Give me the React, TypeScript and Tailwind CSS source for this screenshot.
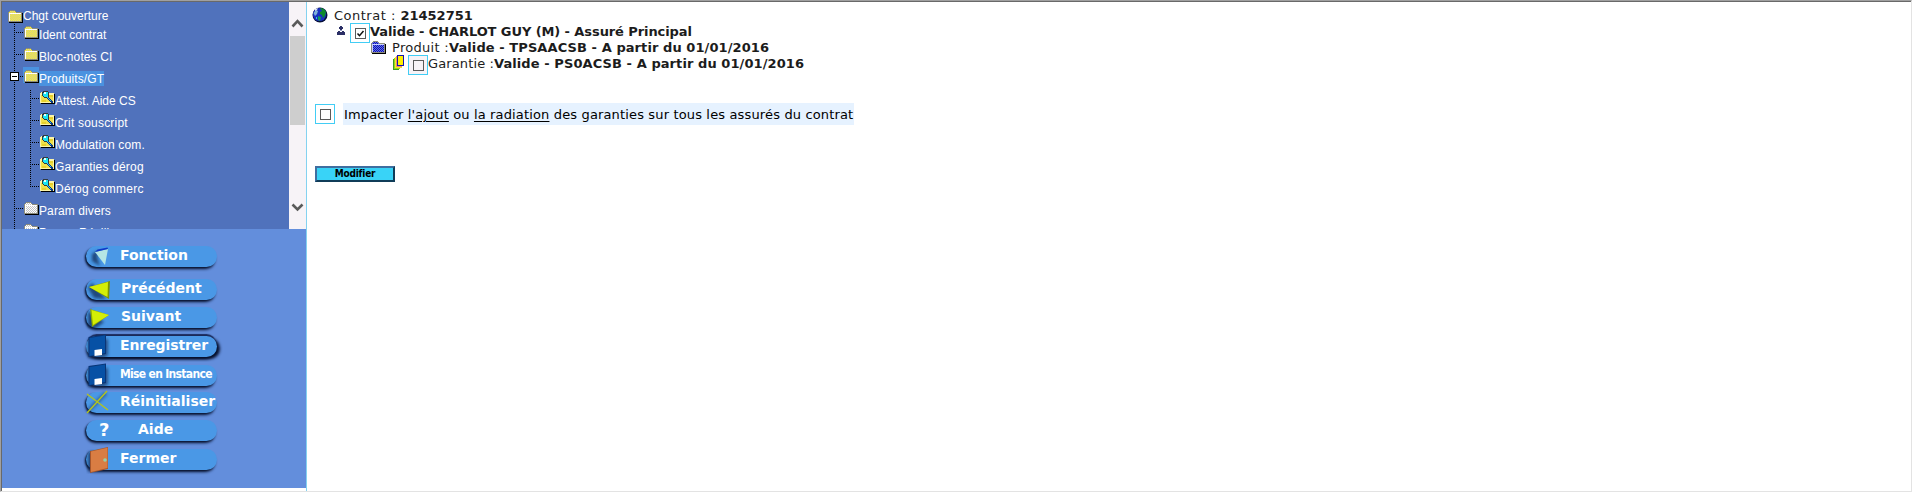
import React from "react";

const V_DOTS = "bg-[repeating-linear-gradient(to_bottom,#000_0_1px,transparent_1px_2px)]";
const H_DOTS = "bg-[repeating-linear-gradient(to_right,#000_0_1px,transparent_1px_2px)]";

function Folder({ id, light, dark, edge = "#fff" }: { id: string; light: string; dark: string; edge?: string }) {
  return (
    <svg width="15" height="13" viewBox="0 0 15 13" shapeRendering="crispEdges" className="block shrink-0">
      <defs>
        <pattern id={id} width="2" height="2" patternUnits="userSpaceOnUse">
          <rect width="2" height="2" fill={light} />
          <rect width="1" height="1" fill={dark} />
          <rect x="1" y="1" width="1" height="1" fill={dark} />
        </pattern>
      </defs>
      <path d="M1 12h13V3h1v10H1z" fill="#000" />
      <path d="M0 2h1V1h1V0h5v1h1v1h6v10H0z" fill="#8c8c7c" />
      <path d="M1 2h1V1h5v1h1v1h5v8H1z" fill={`url(#${id})`} />
      <path d="M1 3h12v1H2v7H1z" fill={edge} />
    </svg>
  );
}

function FolderSearch() {
  return (
    <svg width="15" height="13" viewBox="0 0 15 13" shapeRendering="crispEdges" className="block shrink-0">
      <path d="M1 12h13V3h1v10H1z" fill="#000" />
      <path d="M0 2h1V1h6v1h7v10H0z" fill="#fbf4a8" />
      <path d="M1 4h12v7H1z" fill="#efe04a" />
      <path d="M9 4h4v2H9zM2 9h4v2H2z" fill="#e6cf2c" />
      <path d="M3 0h5v1h1v5H8v1H4V6H3V5H2V1h1z" fill="#303a40" />
      <path d="M4 1h4v5H4V5H3V2h1z" fill="#18e4f4" />
      <path d="M4 1h2v2H4z" fill="#e8ffff" />
      <path d="M7 6h2v1h1v1h1v1h1v1h1v2h-2v-1h-1v-1H9V9H8V8H7z" fill="#123a80" />
      <path d="M7 6h1v1h1v1h1v1h1v1h-1V9H9V8H8V7H7z" fill="#30c8ee" />
    </svg>
  );
}

type TreeNode = {
  label: string;
  kind: "yellow" | "search" | "white";
  depth: 1 | 2;
  spacing: string;
  selected?: boolean;
  last?: boolean;
};

const nodes: TreeNode[] = [
  { label: "Ident contrat", kind: "yellow", depth: 1, spacing: "tracking-[0.05px]" },
  { label: "Bloc-notes CI", kind: "yellow", depth: 1, spacing: "tracking-[0.1px]" },
  { label: "Produits/GT", kind: "yellow", depth: 1, spacing: "tracking-[0.1px]", selected: true },
  { label: "Attest. Aide CS", kind: "search", depth: 2, spacing: "tracking-normal" },
  { label: "Crit souscript", kind: "search", depth: 2, spacing: "tracking-[0.2px]" },
  { label: "Modulation com.", kind: "search", depth: 2, spacing: "tracking-[0.12px]" },
  { label: "Garanties dérog", kind: "search", depth: 2, spacing: "tracking-[0.18px]" },
  { label: "Dérog commerc", kind: "search", depth: 2, spacing: "tracking-[0.26px]", last: true },
  { label: "Param divers", kind: "white", depth: 1, spacing: "tracking-[0.1px]" },
  { label: "Param Résili", kind: "white", depth: 1, spacing: "tracking-[0.2px]" },
];

function TreeRow({ node, index }: { node: TreeNode; index: number }) {
  return (
    <div className="flex h-[22px] shrink-0 items-start">
      <div className="relative h-[22px] w-[9px] shrink-0">
        <div className={`h-full w-px ${V_DOTS}`} />
        {node.depth === 1 && <div className={`absolute left-0 top-2 h-px w-[9px] ${H_DOTS}`} />}
        {node.selected && (
          <div className="absolute -left-1 top-1 flex h-[9px] w-[9px] items-center justify-center border border-black bg-white">
            <div className="h-px w-[5px] bg-black" />
          </div>
        )}
      </div>
      {node.depth === 2 && (
        <div className="relative ml-[7px] h-[22px] w-[9px] shrink-0">
          <div className={`w-px ${node.last ? "h-[9px]" : "h-full"} ${V_DOTS}`} />
          <div className={`absolute left-0 top-2 h-px w-[9px] ${H_DOTS}`} />
        </div>
      )}
      <div className={`-mt-px h-4 shrink-0 pl-px ${node.kind === "search" ? "pt-[2px]" : "pt-[3px]"} ${node.selected ? "bg-[#4a92e0]" : ""}`}>
        {node.kind === "search" && <FolderSearch />}
        {node.kind === "yellow" && <Folder id={`folder-${index}`} light="#fbf33a" dark="#cfc88c" />}
        {node.kind === "white" && <Folder id={`folder-${index}`} light="#ffffff" dark="#c4c4c4" />}
      </div>
      <span className={`mt-[3px] h-[15px] whitespace-nowrap text-[12px] leading-[16px] text-white ${node.spacing} ${node.selected ? "bg-[#4a92e0]" : ""}`}>
        {node.label}
      </span>
    </div>
  );
}

type IconKind = "back" | "prev" | "next" | "disk" | "cross" | "help" | "door";

function ButtonIcon({ kind }: { kind: IconKind }) {
  return (
    <svg width="28" height="28" viewBox="0 0 28 28" className="absolute -left-0.5 -top-[3px]">
      <defs>
        <filter id={`soft-${kind}`} x="-30%" y="-30%" width="160%" height="160%">
          <feGaussianBlur stdDeviation="1.5" />
        </filter>
      </defs>
      {kind === "back" && (
        <>
          <path d="M15 7 8 11 8 18 16 23 13 14Z" fill="#0b2550" opacity=".7" filter="url(#soft-back)" />
          <path d="M11 9 24 6 21 22Z" fill="#b4e6e4" />
          <path d="M11 9 24 6 23.5 4.5 13.5 6.5Z" fill="#1038c8" />
        </>
      )}
      {kind === "prev" && (
        <>
          <path d="M8 7 4 12 10 22 22 23Z" fill="#0b2550" opacity=".7" filter="url(#soft-prev)" />
          <path d="M5 11 26 5 25 23Z" fill="#7d9400" />
          <path d="M5 11 24 6 23.5 21Z" fill="#d4ee06" />
        </>
      )}
      {kind === "next" && (
        <>
          <path d="M4 7v16l8 1 8-6Z" fill="#0b2550" opacity=".7" filter="url(#soft-next)" />
          <path d="M6 5 25 11 8 23Z" fill="#8fa800" />
          <path d="M7.5 6 25 11 9 21Z" fill="#d4ee06" />
        </>
      )}
      {kind === "disk" && (
        <>
          <path d="M4 6h20v16l-4 3H4Z" fill="#0b2550" opacity=".6" filter="url(#soft-disk)" />
          <path d="M4.5 4 22 1.5V21L4.5 24Z" fill="#0a3576" />
          <path d="M5.5 5 21 2.5V20L5.5 23Z" fill="#0751a5" />
          <path d="m10.5 17 7.5-1v6l-7.5 1Z" fill="#fff" />
        </>
      )}
      {kind === "cross" && (
        <>
          <path d="M12 14 22 4M12 14 4 22" stroke="#12386e" strokeWidth="4" opacity=".5" filter="url(#soft-cross)" />
          <path d="M3 5 24 21M23 2 3 24" stroke="#b3c41e" strokeWidth="1.4" fill="none" />
        </>
      )}
      {kind === "door" && (
        <>
          <path d="M4 6v20l6-1V6Z" fill="#0b2550" opacity=".7" filter="url(#soft-door)" />
          <path d="M6 5 24 1v22L6 27Z" fill="#a5562c" />
          <path d="M7 5.5 23.5 1.8V22L7 26Z" fill="#d97d43" />
          <circle cx="21" cy="14" r="1.8" fill="#9ad0a4" />
        </>
      )}
    </svg>
  );
}

const SHADOW = "shadow-[-1px_3px_3px_-1px_#06102c,-2px_1px_2px_-1px_#06102c]";

const buttons: { label: string; icon: IconKind; row: string; text: string }[] = [
  { label: "Fonction", icon: "back", row: `mt-[17px] ${SHADOW}`, text: "pl-[34px] text-[14px]" },
  { label: "Précédent", icon: "prev", row: `mt-[12px] ${SHADOW}`, text: "pl-[35px] text-[14px]" },
  { label: "Suivant", icon: "next", row: `mt-[7px] ${SHADOW}`, text: "pl-[35px] text-[14px]" },
  {
    label: "Enregistrer",
    icon: "disk",
    row: "mt-[8px] shadow-[0_-3px_1px_-1px_#1a2a5a,3px_2px_3px_0_#06102c,-1px_3px_3px_-1px_#06102c]",
    text: "pl-[34px] text-[14px] tracking-[-0.1px]",
  },
  {
    label: "Mise en Instance",
    icon: "disk",
    row: `mt-[8px] ${SHADOW}`,
    text: "pl-[34px] text-[12px] tracking-[-0.68px] font-['DejaVu_Sans_Condensed','DejaVu_Sans',sans-serif]",
  },
  { label: "Réinitialiser", icon: "cross", row: `mt-[6px] ${SHADOW}`, text: "pl-[34px] text-[14px]" },
  { label: "Aide", icon: "help", row: `mt-[7px] ${SHADOW}`, text: "pl-[14px] text-[14px]" },
  { label: "Fermer", icon: "door", row: `mt-[8px] ${SHADOW}`, text: "pl-[34px] text-[14px]" },
];

function Check({ checked, tint }: { checked?: boolean; tint?: boolean }) {
  return (
    <div className={`flex h-5 w-5 shrink-0 items-start border border-[#42cdf5] pl-1 pt-1 ${tint ? "bg-[#f7f3f7]" : "bg-white"}`}>
      <div className="flex h-[11px] w-[11px] items-center justify-center border border-[#5a5a5a]">
        {checked && (
          <svg width="9" height="9" viewBox="0 0 9 9">
            <path d="M1.5 4.5 3.5 6.7 7.5 2" fill="none" stroke="#111" strokeWidth="1.5" />
          </svg>
        )}
      </div>
    </div>
  );
}

function Globe() {
  return (
    <svg width="16" height="16" viewBox="0 0 16 16" className="block shrink-0">
      <circle cx="8" cy="8" r="7.5" fill="#06103a" />
      <circle cx="7.5" cy="7.5" r="6.6" fill="#1a30c0" />
      <path d="M8 1c3 0 5 2 6 4l-1 4-2 2-1-3-2-1V5l2-1z" fill="#0e8a2c" />
      <path d="M1.5 6 4 3l2 1-1 3-2 2z" fill="#7fb0d8" />
      <path d="m6 9 3 1-1 4-2-1z" fill="#149a58" />
      <path d="m3 2 3-1-1 2-2 1z" fill="#dfe8f2" />
      <path d="M4 10h1v2H4z" fill="#28c8e0" />
    </svg>
  );
}

function Person() {
  return (
    <svg width="8" height="9" viewBox="0 0 8 9" shapeRendering="crispEdges" className="block shrink-0">
      <path d="M3 0h2v1h1v2H5v1H3V3H2V1h1z" fill="#2b2f66" />
      <path d="M1 5h2v1h2V5h2v1h1v3H0V6h1z" fill="#2b2f66" />
      <path d="M3 4h2v1H3z" fill="#9aa0cc" />
    </svg>
  );
}

function Cards() {
  return (
    <svg width="12" height="15" viewBox="0 0 12 15" shapeRendering="crispEdges" className="block shrink-0">
      <path d="M0 4h6v11H0z" fill="#3f9a20" />
      <path d="M1 3h6v11H1z" fill="#8fd820" />
      <path d="M2 2h7v11H2z" fill="#f6ee20" />
      <path d="M3 1h6v11H3z" fill="#f08a70" />
      <path d="M4 0h7v11H4z" fill="#1414b4" />
      <path d="M5 1h5v9H5z" fill="#fff000" />
    </svg>
  );
}

function Sidebar() {
  return (
    <aside className="flex w-[304px] shrink-0 flex-col">
      <div className="flex h-[227px] shrink-0">
        <div className="flex h-full w-[287px] flex-col overflow-hidden bg-[#5072bc] pl-3 font-['Liberation_Sans',sans-serif]">
          <div className="flex h-[22px] shrink-0 items-start pt-2">
            <div className="-ml-1.5 flex items-start">
              <Folder id="folder-root" light="#fbf33a" dark="#cfc88c" />
              <span className="-mt-px whitespace-nowrap text-[12px] leading-[15px] text-white">Chgt couverture</span>
            </div>
          </div>
          {nodes.map((node, i) => (
            <TreeRow key={node.label} node={node} index={i} />
          ))}
        </div>
        <div className="flex w-[17px] flex-col items-center bg-[#f7f3f7]">
          <svg width="17" height="34" viewBox="0 0 17 34" className="block shrink-0">
            <path d="M3.500 24.500 8.500 19.200l5 5.300" fill="none" stroke="#5a5a5a" strokeWidth="2.600" />
          </svg>
          <div className="h-[89px] w-[15px] bg-[#cecece]" />
          <svg width="17" height="104" viewBox="0 0 17 104" className="mt-auto block shrink-0">
            <path d="m3.500 79.500 5 5 5-5" fill="none" stroke="#5a5a5a" strokeWidth="2.600" />
          </svg>
        </div>
      </div>
      <nav className="flex h-[259px] flex-col items-start bg-[#638edc] pl-[84px]">
        {buttons.map((b) => (
          <button key={b.label} className={`relative flex h-[21px] w-[131px] shrink-0 items-center rounded-full bg-[#4a98e6] font-bold text-white ${b.row}`}>
            <ButtonIcon kind={b.icon} />
            {b.icon === "help" && <span className="w-[38px] shrink-0 pb-[2px] pl-[13px] text-left text-[18px] leading-[17px]">?</span>}
            <span className={`whitespace-nowrap pb-[3px] leading-[18px] ${b.text}`}>{b.label}</span>
          </button>
        ))}
      </nav>
    </aside>
  );
}

function Content() {
  return (
    <main className="flex grow flex-col border-l border-[#84d2f0] pl-[5px] pt-1.5 text-[13px] leading-4 text-[#1c1c1c]">
      <div className="flex h-4 items-start">
        <div className="-mt-px"><Globe /></div>
        <span className="ml-[6px] whitespace-pre tracking-[0.5px]">Contrat : <b className="tracking-normal">21452751</b></span>
      </div>
      <div className="flex h-4 items-start pl-[25px]">
        <div className="mt-0.5"><Person /></div>
        <div className="-mt-px ml-[5px]"><Check checked /></div>
        <b className="whitespace-nowrap tracking-[-0.09px]">Valide - CHARLOT GUY (M) - Assuré Principal</b>
      </div>
      <div className="flex h-4 items-start pl-[59px]">
        <div className="mt-px"><Folder id="folder-blue" light="#5a6cf0" dark="#1414a8" edge="#c8d0ff" /></div>
        <span className="ml-[6px] whitespace-nowrap tracking-[0.3px]">
          Produit :<b className="tracking-[0.08px]">Valide - TPSAACSB - A partir du 01/01/2016</b>
        </span>
      </div>
      <div className="flex h-4 items-start pl-[81px]">
        <div className="-mt-px"><Cards /></div>
        <div className="-mt-px ml-[3px]"><Check tint /></div>
        <span className="whitespace-nowrap tracking-[0.12px]">
          Garantie :<b className="tracking-[0.08px]">Valide - PS0ACSB - A partir du 01/01/2016</b>
        </span>
      </div>
      <div className="mt-[31px] flex h-[22px] items-center pl-[3px]">
        <Check />
        <div className="ml-2 h-[22px] w-[511px] whitespace-nowrap bg-[#e6f2ff] pl-px leading-[24px] tracking-[0.148px] text-black">
          Impacter <u className="underline-offset-2">l'ajout</u> ou <u className="underline-offset-2">la radiation</u> des garanties sur tous les assurés du contrat
        </div>
      </div>
      <button className="ml-[3px] mt-[41px] flex h-4 w-20 items-center justify-center border-2 border-b-[#103c58] border-l-[#3f6ea0] border-r-[#103c58] border-t-[#3f6ea0] bg-[#39d3f7] font-['DejaVu_Sans_Condensed','DejaVu_Sans',sans-serif] text-[10px] font-bold leading-3 tracking-[-0.2px] text-black">
        Modifier
      </button>
    </main>
  );
}

export default function App() {
  return (
    <div className="h-[492px] w-[1912px] overflow-hidden border-b border-l border-r border-t border-b-[#e3e3e3] border-l-[#a0a0a0] border-r-[#e3e3e3] border-t-[#a0a0a0] bg-white font-['DejaVu_Sans',sans-serif]">
      <div className="flex h-full border-l border-t border-[#696969]">
        <Sidebar />
        <Content />
      </div>
    </div>
  );
}
